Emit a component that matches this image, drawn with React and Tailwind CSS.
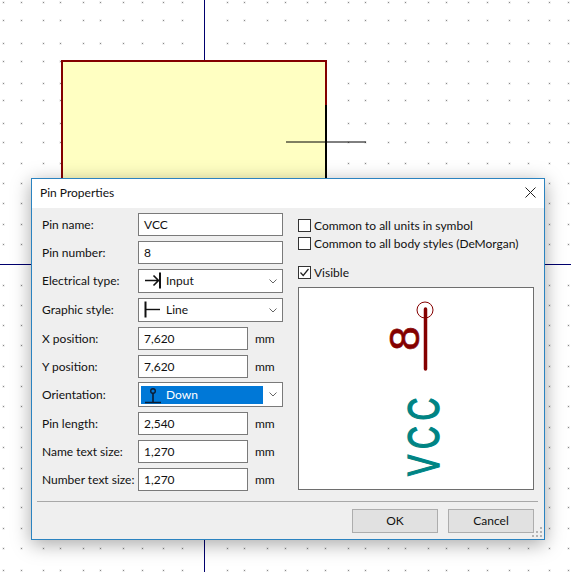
import React from "react";

// grid dots of the schematic canvas, measured off the screenshot
const dotXs = [3, 21, 43, 60, 83, 100, 123, 142, 163, 182, 227, 244, 267, 285, 307, 325, 348, 365, 388, 405, 428, 446, 468, 487, 509, 528, 549, 568];
const dotYs = [2, 20, 43, 61, 83, 100, 123, 142, 163, 183, 203, 224, 244, 285, 305, 325, 345, 366, 386, 406, 427, 447, 468, 488, 507, 528, 548, 570];

const Canvas = () => (
  <svg className="absolute inset-0" width="571" height="572" viewBox="0 0 571 572">
    {dotYs.map((y) =>
      dotXs.map((x) => (
        <g key={`${x}-${y}`}>
          <rect x={x - 1} y={y - 1} width="3" height="3" fill="#f1f1f1" />
          <rect x={x} y={y} width="1" height="1" fill="#888888" />
        </g>
      ))
    )}
    <line x1="204.5" y1="0" x2="204.5" y2="572" stroke="#00006e" />
    <line x1="0" y1="264.5" x2="571" y2="264.5" stroke="#00006e" />
    <rect x="62" y="61" width="264" height="130" fill="#ffffc2" stroke="#840000" strokeWidth="2" />
    <line x1="326" y1="105" x2="326" y2="180" stroke="#000000" strokeWidth="2" />
    <line x1="286" y1="142" x2="366" y2="142" stroke="#000000" />
  </svg>
);

const Label = ({ children }) => <div className="w-[96px] shrink-0 whitespace-nowrap">{children}</div>;

const TextField = ({ value, wide }) => (
  <div className={`flex h-full items-center border border-[#7a7a7a] bg-white pl-[5px] ${wide ? "w-[145px]" : "w-[110px]"}`}>
    {value}
  </div>
);

const Row = ({ label, height, value, unit }) => (
  <div className={`flex items-center ${height}`}>
    <Label>{label}</Label>
    <TextField value={value} wide={!unit} />
    {unit && <div className="ml-[7px]">{unit}</div>}
  </div>
);

const Chevron = () => (
  <svg width="8" height="5" viewBox="0 0 8 5" className="shrink-0">
    <path d="M0.5 0.5 L4 4 L7.5 0.5" fill="none" stroke="#666666" />
  </svg>
);

const InputIcon = () => (
  <svg width="18" height="18" viewBox="0 0 18 18" className="shrink-0">
    <path d="M1 8.5 H14 M9.5 3.5 L14.5 8.5 L9.5 13.5" fill="none" stroke="#111111" strokeWidth="1.6" />
    <path d="M16 0.5 V16.5" fill="none" stroke="#111111" strokeWidth="2" />
  </svg>
);

const LineIcon = () => (
  <svg width="18" height="18" viewBox="0 0 18 18" className="shrink-0">
    <path d="M1.5 0.5 V16.5" fill="none" stroke="#111111" strokeWidth="2" />
    <path d="M1 8.5 H16" fill="none" stroke="#111111" strokeWidth="1.4" />
  </svg>
);

const DownIcon = () => (
  <svg width="18" height="18" viewBox="0 0 18 18" className="shrink-0">
    <circle cx="9" cy="5" r="2.3" fill="none" stroke="#0b1c33" strokeWidth="1.4" />
    <path d="M9 7 V16.5 M1 16.5 H17" fill="none" stroke="#0b1c33" strokeWidth="1.6" />
  </svg>
);

const Combo = ({ label, height, icon, value }) => (
  <div className={`flex items-center ${height}`}>
    <Label>{label}</Label>
    <div className="flex h-full w-[145px] items-center justify-between border border-[#7a7a7a] bg-white pl-[5px] pr-[4px]">
      <div className="flex items-center gap-[4px]">
        {icon}
        <span>{value}</span>
      </div>
      <div className="mr-[1px]">
        <Chevron />
      </div>
    </div>
  </div>
);

const OrientationCombo = () => (
  <div className="flex h-[25px] items-center">
    <Label>Orientation:</Label>
    <div className="flex h-full w-[145px] items-center justify-between border border-[#7a7a7a] bg-white pl-[2px] pr-[4px]">
      <div className="flex h-[18px] w-[122px] items-center gap-[4px] bg-[#0078d7] pl-[3px] text-white">
        <DownIcon />
        <span>Down</span>
      </div>
      <div className="mr-[1px]">
        <Chevron />
      </div>
    </div>
  </div>
);

const Check = ({ label, checked, className }) => (
  <div className={`flex h-[13px] items-center gap-[3px] whitespace-nowrap ${className}`}>
    <div className="h-[13px] w-[13px] shrink-0 border border-[#333333] bg-white">
      {checked && (
        <svg width="11" height="11" viewBox="0 0 11 11" className="block">
          <path d="M1.5 5.5 L4.2 8.5 L9.5 2" fill="none" stroke="#222222" strokeWidth="1.2" />
        </svg>
      )}
    </div>
    <span>{label}</span>
  </div>
);

// pin preview, viewBox keeps the page coordinates
const PinPreview = () => (
  <svg width="234" height="201" viewBox="299 288 234 201" className="block">
    <circle cx="425" cy="310" r="8" fill="none" stroke="#840000" />
    <line x1="425.5" y1="309" x2="425.5" y2="369" stroke="#840000" strokeWidth="3.5" strokeLinecap="round" />
    <text
      transform="translate(418.5,338.5) rotate(-90) scale(1.05,1)"
      textAnchor="middle"
      fontFamily="'Liberation Sans', sans-serif"
      fontSize="42"
      fill="#840000"
      stroke="#840000"
      strokeWidth="0.6"
    >
      8
    </text>
    <text
      transform="translate(439,476) rotate(-90) scale(0.72,1)"
      fontFamily="'Liberation Sans', sans-serif"
      fontSize="44"
      letterSpacing="8"
      fill="#008484"
      stroke="#008484"
      strokeWidth="1.4"
    >
      VCC
    </text>
  </svg>
);

const Button = ({ children }) => (
  <button className="flex h-[24px] w-[86px] items-center justify-center border border-[#adadad] bg-[#e1e1e1] text-[#111111]">
    {children}
  </button>
);

const Grip = () => (
  <svg width="11" height="11" viewBox="0 0 11 11" className="absolute bottom-[1px] right-[1px]">
    {[[8, 0], [4, 4], [8, 4], [0, 8], [4, 8], [8, 8]].map(([x, y]) => (
      <rect key={`${x}-${y}`} x={x} y={y} width="2" height="2" fill="#b4b4b4" />
    ))}
  </svg>
);

const PinDialog = () => (
  <div className="absolute left-[31px] top-[178px] flex h-[362px] w-[514px] flex-col border border-[#2b83c0] bg-[#efefef] shadow-[0_4px_18px_rgba(0,0,0,0.35)]">
    {/* title bar */}
    <div className="flex h-[29px] shrink-0 items-center justify-between bg-white pb-[2px] pl-[8px] pr-[8px]">
      <span>Pin Properties</span>
      <svg width="11" height="11" viewBox="0 0 11 11">
        <path d="M0.5 0.5 L10.5 10.5 M10.5 0.5 L0.5 10.5" fill="none" stroke="#222222" />
      </svg>
    </div>

    <div className="flex pl-[10px] pt-[5px]">
      <div className="flex w-[241px] shrink-0 flex-col">
        <Row label="Pin name:" height="h-[23px]" value="VCC" />
        <div className="mt-[5px]">
          <Row label="Pin number:" height="h-[23px]" value="8" />
        </div>
        <div className="mt-[5px]">
          <Combo label="Electrical type:" height="h-[24px]" icon={<InputIcon />} value="Input" />
        </div>
        <div className="mt-[5px]">
          <Combo label="Graphic style:" height="h-[24px]" icon={<LineIcon />} value="Line" />
        </div>
        <div className="mt-[5px]">
          <Row label="X position:" height="h-[23px]" value="7,620" unit="mm" />
        </div>
        <div className="mt-[5px]">
          <Row label="Y position:" height="h-[23px]" value="7,620" unit="mm" />
        </div>
        <div className="mt-[4px]">
          <OrientationCombo />
        </div>
        <div className="mt-[5px]">
          <Row label="Pin length:" height="h-[23px]" value="2,540" unit="mm" />
        </div>
        <div className="mt-[5px]">
          <Row label="Name text size:" height="h-[23px]" value="1,270" unit="mm" />
        </div>
        <div className="mt-[5px]">
          <Row label="Number text size:" height="h-[23px]" value="1,270" unit="mm" />
        </div>
      </div>

      <div className="ml-[15px] flex w-[236px] flex-col pt-[6px]">
        <Check label="Common to all units in symbol" />
        <Check label="Common to all body styles (DeMorgan)" className="mt-[5px]" />
        <Check label="Visible" checked className="mt-[16px]" />
        <div className="mt-[8px] h-[203px] border border-[#6e6e6e] bg-white">
          <PinPreview />
        </div>
      </div>
    </div>

    <div className="ml-[5px] mr-[6px] mt-[10px] h-[1px] bg-[#a8a8a8]" />

    <div className="mt-[7px] flex justify-end gap-[10px] pr-[10px]">
      <Button>OK</Button>
      <Button>Cancel</Button>
    </div>
    <Grip />
  </div>
);

const App = () => (
  <div className="relative h-[572px] w-[571px] overflow-hidden bg-white font-['Lato',sans-serif] text-[12px] text-[#111111]">
    <Canvas />
    <PinDialog />
  </div>
);

export default App;
